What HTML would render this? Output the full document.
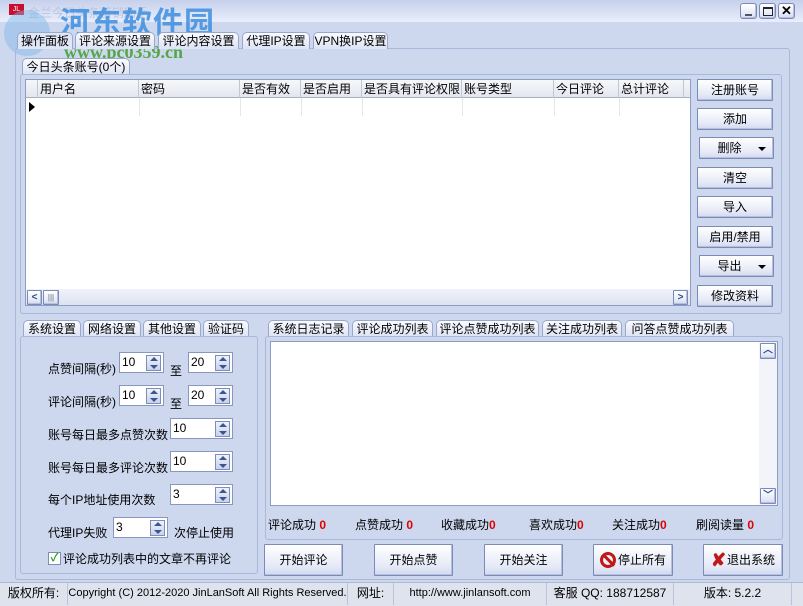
<!DOCTYPE html>
<html><head><meta charset="utf-8"><style>
*{box-sizing:border-box;margin:0;padding:0}
body{width:803px;height:606px;overflow:hidden;background:#cdd7ee;font-family:"Liberation Sans","Noto Sans CJK SC",sans-serif;font-size:12px;color:#000;position:relative}
.a{position:absolute}
.tab{position:absolute;height:17px;border:1px solid #98a8cc;border-bottom:none;border-radius:5px 5px 0 0;background:linear-gradient(#fafbff,#dde3f3);text-align:center;line-height:16px;white-space:nowrap}
.btn{position:absolute;border:1px solid #7b8bb8;background:linear-gradient(#ffffff,#e6eaf7 70%,#d3daf0);text-align:center;border-radius:1px;box-shadow:inset -1px -1px 0 #b6c0dd}
.pan{position:absolute;border:1px solid #a9b7da;border-radius:3px}
.inp{position:absolute;background:#fff;border:1px solid #8797c0;height:21px;padding:1px 0 0 2px;line-height:16px}
.sp{position:absolute;right:2px;top:2px;width:15px;height:16px;border:1px solid #7d8db8;background:linear-gradient(#eef2fb,#c8d2ec)}
.sp:before{content:"";position:absolute;left:3px;top:1px;border:4px solid transparent;border-bottom:4px solid #3a5590;border-top:none}
.sp:after{content:"";position:absolute;left:3px;top:9px;border:4px solid transparent;border-top:4px solid #3a5590;border-bottom:none}
.lb{position:absolute;white-space:nowrap}
.hd{position:absolute;top:0;height:18px;border-right:1px solid #c0c6d4;line-height:18px;padding-left:2px;white-space:nowrap;overflow:hidden}
.red{color:#e00000;font-weight:bold}
.cell{position:absolute;top:0;height:22px;line-height:21px;border-right:1px solid #b9c3dd;white-space:nowrap;text-align:center}
</style></head><body>
<div class="a" style="left:0;top:0;width:803px;height:22px;background:linear-gradient(#c6d0ec,#e9eefb)"></div>
<div class="a" style="left:9px;top:4px;width:15px;height:11px;background:#c8102e;color:#fff;font-size:7px;line-height:11px;text-align:center">JL</div>
<div class="lb" style="left:28px;top:4px;color:#b8c4de;font-size:12px">金兰今日头条营销助手</div>
<div class="a" style="left:4px;top:10px;width:46px;height:46px;border-radius:50%;background:#7fb6e8;opacity:.45"></div>
<div class="lb" style="left:60px;top:-2px;color:#3e8fe0;font-size:30px;font-weight:bold;opacity:.85;letter-spacing:1px">河东软件园</div>
<div class="lb" style="left:64px;top:42px;color:#3f9e2a;font-size:18px;font-weight:bold;font-family:'Liberation Serif',serif;opacity:.85">www.pc0359.cn</div>
<div class="btn" style="left:740px;top:3px;width:17px;height:16px;border-radius:3px"><div class="a" style="left:4px;top:10px;width:7px;height:2px;background:#556"></div></div>
<div class="btn" style="left:759px;top:3px;width:17px;height:16px;border-radius:3px"><div class="a" style="left:3px;top:3px;width:10px;height:9px;border:1px solid #223;border-top-width:2px"></div></div>
<div class="btn" style="left:778px;top:3px;width:17px;height:16px;border-radius:3px;font-weight:bold;line-height:13px;font-size:13px">✕</div>
<div class="pan" style="left:15px;top:48px;width:775px;height:532px"></div>
<div class="tab" style="left:17px;top:32px;width:56px;background:#dfe6f6;height:17px;border-color:#9aa9cc">操作面板</div>
<div class="tab" style="left:75px;top:32px;width:80px">评论来源设置</div>
<div class="tab" style="left:158px;top:32px;width:81px">评论内容设置</div>
<div class="tab" style="left:242px;top:32px;width:68px">代理IP设置</div>
<div class="tab" style="left:313px;top:32px;width:75px">VPN换IP设置</div>
<div class="tab" style="left:22px;top:58px;width:108px">今日头条账号(0个)</div>
<div class="pan" style="left:20px;top:74px;width:762px;height:240px"></div>
<div class="a" style="left:25px;top:79px;width:666px;height:227px;background:#fff;border:1px solid #8d9cc3;overflow:hidden">
 <div class="a" style="left:0;top:0;width:666px;height:18px;background:linear-gradient(#f7f8fb,#e3e6ee);border-bottom:1px solid #a9b0c0"></div>
 <div class="hd" style="left:0;width:12px"></div>
 <div class="hd" style="left:12px;width:101px">用户名</div>
 <div class="hd" style="left:113px;width:101px">密码</div>
 <div class="hd" style="left:214px;width:61px">是否有效</div>
 <div class="hd" style="left:275px;width:61px">是否启用</div>
 <div class="hd" style="left:336px;width:100px">是否具有评论权限</div>
 <div class="hd" style="left:436px;width:92px">账号类型</div>
 <div class="hd" style="left:528px;width:65px">今日评论</div>
 <div class="hd" style="left:593px;width:65px">总计评论</div>
 <div class="a" style="left:113px;top:18px;width:1px;height:18px;background:#e6e6e6"></div>
 <div class="a" style="left:214px;top:18px;width:1px;height:18px;background:#e6e6e6"></div>
 <div class="a" style="left:275px;top:18px;width:1px;height:18px;background:#e6e6e6"></div>
 <div class="a" style="left:336px;top:18px;width:1px;height:18px;background:#e6e6e6"></div>
 <div class="a" style="left:436px;top:18px;width:1px;height:18px;background:#e6e6e6"></div>
 <div class="a" style="left:528px;top:18px;width:1px;height:18px;background:#e6e6e6"></div>
 <div class="a" style="left:593px;top:18px;width:1px;height:18px;background:#e6e6e6"></div>
 <div class="a" style="left:3px;top:22px;border:5px solid transparent;border-left:6px solid #000;border-right:none"></div>
 <div class="a" style="left:0;top:209px;width:664px;height:16px;background:linear-gradient(#f0f3fa,#dde3f2)"></div>
 <div class="btn" style="left:1px;top:210px;width:15px;height:15px;font-size:10px;line-height:13px;color:#2a4a8a;font-weight:bold">&lt;</div>
 <div class="btn" style="left:17px;top:210px;width:16px;height:15px;font-size:8px;line-height:13px;color:#667">|||</div>
 <div class="btn" style="left:647px;top:210px;width:15px;height:15px;font-size:10px;line-height:13px;color:#2a4a8a;font-weight:bold">&gt;</div>
</div>
<div class="btn" style="left:697px;top:79px;width:76px;height:22px;line-height:20px">注册账号</div>
<div class="btn" style="left:697px;top:108px;width:76px;height:22px;line-height:20px">添加</div>
<div class="btn" style="left:699px;top:137px;width:75px;height:22px;line-height:20px;padding-right:14px">删除<span class="a" style="right:7px;top:9px;border:4px solid transparent;border-top:4px solid #000;border-bottom:none"></span></div>
<div class="btn" style="left:697px;top:167px;width:76px;height:22px;line-height:20px">清空</div>
<div class="btn" style="left:697px;top:196px;width:76px;height:22px;line-height:20px">导入</div>
<div class="btn" style="left:697px;top:226px;width:76px;height:22px;line-height:20px">启用/禁用</div>
<div class="btn" style="left:699px;top:255px;width:75px;height:22px;line-height:20px;padding-right:14px">导出<span class="a" style="right:7px;top:9px;border:4px solid transparent;border-top:4px solid #000;border-bottom:none"></span></div>
<div class="btn" style="left:697px;top:285px;width:76px;height:22px;line-height:20px">修改资料</div>
<div class="tab" style="left:23px;top:320px;width:58px">系统设置</div>
<div class="tab" style="left:83px;top:320px;width:58px">网络设置</div>
<div class="tab" style="left:143px;top:320px;width:58px">其他设置</div>
<div class="tab" style="left:203px;top:320px;width:46px">验证码</div>
<div class="pan" style="left:20px;top:336px;width:238px;height:238px"></div>
<div class="lb" style="left:48px;top:360px">点赞间隔(秒)</div>
<div class="inp" style="left:119px;top:352px;width:45px">10<div class="sp"></div></div>
<div class="lb" style="left:170px;top:362px">至</div>
<div class="inp" style="left:188px;top:352px;width:45px">20<div class="sp"></div></div>
<div class="lb" style="left:48px;top:393px">评论间隔(秒)</div>
<div class="inp" style="left:119px;top:385px;width:45px">10<div class="sp"></div></div>
<div class="lb" style="left:170px;top:395px">至</div>
<div class="inp" style="left:188px;top:385px;width:45px">20<div class="sp"></div></div>
<div class="lb" style="left:48px;top:426px">账号每日最多点赞次数</div>
<div class="inp" style="left:170px;top:418px;width:63px">10<div class="sp"></div></div>
<div class="lb" style="left:48px;top:459px">账号每日最多评论次数</div>
<div class="inp" style="left:170px;top:451px;width:63px">10<div class="sp"></div></div>
<div class="lb" style="left:48px;top:491px">每个IP地址使用次数</div>
<div class="inp" style="left:170px;top:484px;width:63px">3<div class="sp"></div></div>
<div class="lb" style="left:48px;top:524px">代理IP失败</div>
<div class="inp" style="left:113px;top:517px;width:55px">3<div class="sp"></div></div>
<div class="lb" style="left:174px;top:524px">次停止使用</div>
<div class="a" style="left:48px;top:552px;width:13px;height:13px;background:#fff;border:1px solid #7d8db8;color:#21a121;font-size:11px;line-height:11px;text-align:center;font-weight:bold">✓</div>
<div class="lb" style="left:63px;top:550px">评论成功列表中的文章不再评论</div>
<div class="tab" style="left:268px;top:320px;width:81px">系统日志记录</div>
<div class="tab" style="left:352px;top:320px;width:81px">评论成功列表</div>
<div class="tab" style="left:436px;top:320px;width:103px">评论点赞成功列表</div>
<div class="tab" style="left:542px;top:320px;width:80px">关注成功列表</div>
<div class="tab" style="left:625px;top:320px;width:109px">问答点赞成功列表</div>
<div class="pan" style="left:265px;top:336px;width:518px;height:204px"></div>
<div class="a" style="left:270px;top:341px;width:508px;height:165px;background:#fff;border:1px solid #8d9cc3">
 <div class="a" style="right:0;top:0;width:18px;height:163px;background:#f2f4fa"></div>
 <div class="btn" style="right:1px;top:1px;width:16px;height:16px;font-size:10px;line-height:14px;color:#2a4a8a;font-weight:bold">︿</div>
 <div class="btn" style="right:1px;bottom:1px;width:16px;height:16px;font-size:10px;line-height:14px;color:#2a4a8a;font-weight:bold">﹀</div>
</div>
<div class="lb" style="left:268px;top:516px">评论成功 <span class="red">0</span></div>
<div class="lb" style="left:355px;top:516px">点赞成功 <span class="red">0</span></div>
<div class="lb" style="left:441px;top:516px">收藏成功<span class="red">0</span></div>
<div class="lb" style="left:529px;top:516px">喜欢成功<span class="red">0</span></div>
<div class="lb" style="left:612px;top:516px">关注成功<span class="red">0</span></div>
<div class="lb" style="left:696px;top:516px">刷阅读量 <span class="red">0</span></div>
<div class="btn" style="left:264px;top:544px;width:79px;height:32px;line-height:30px">开始评论</div>
<div class="btn" style="left:374px;top:544px;width:79px;height:32px;line-height:30px">开始点赞</div>
<div class="btn" style="left:484px;top:544px;width:79px;height:32px;line-height:30px">开始关注</div>
<div class="btn" style="left:593px;top:544px;width:80px;height:32px;line-height:30px;padding-left:18px"><span class="a" style="left:6px;top:7px;width:16px;height:16px;border:3px solid #c01818;border-radius:50%"></span><span class="a" style="left:13px;top:7px;width:3px;height:16px;background:#c01818;transform:rotate(-45deg)"></span>停止所有</div>
<div class="btn" style="left:703px;top:544px;width:80px;height:32px;line-height:30px;padding-left:16px"><span class="a" style="left:7px;top:0;color:#c01818;font-size:18px;font-weight:bold">✘</span>退出系统</div>
<div class="a" style="left:0;top:582px;width:803px;height:24px;background:#dfe3ee;border-top:1px solid #b0b8cf">
 <div class="cell" style="left:0;width:68px">版权所有:</div>
 <div class="cell" style="left:68px;width:280px;font-size:11px">Copyright (C) 2012-2020 JinLanSoft All Rights Reserved.</div>
 <div class="cell" style="left:348px;width:46px">网址:</div>
 <div class="cell" style="left:394px;width:153px;font-size:11px">http://www.jinlansoft.com</div>
 <div class="cell" style="left:547px;width:127px">客服 QQ: 188712587</div>
 <div class="cell" style="left:674px;width:118px">版本: 5.2.2</div>
</div>
</body></html>
